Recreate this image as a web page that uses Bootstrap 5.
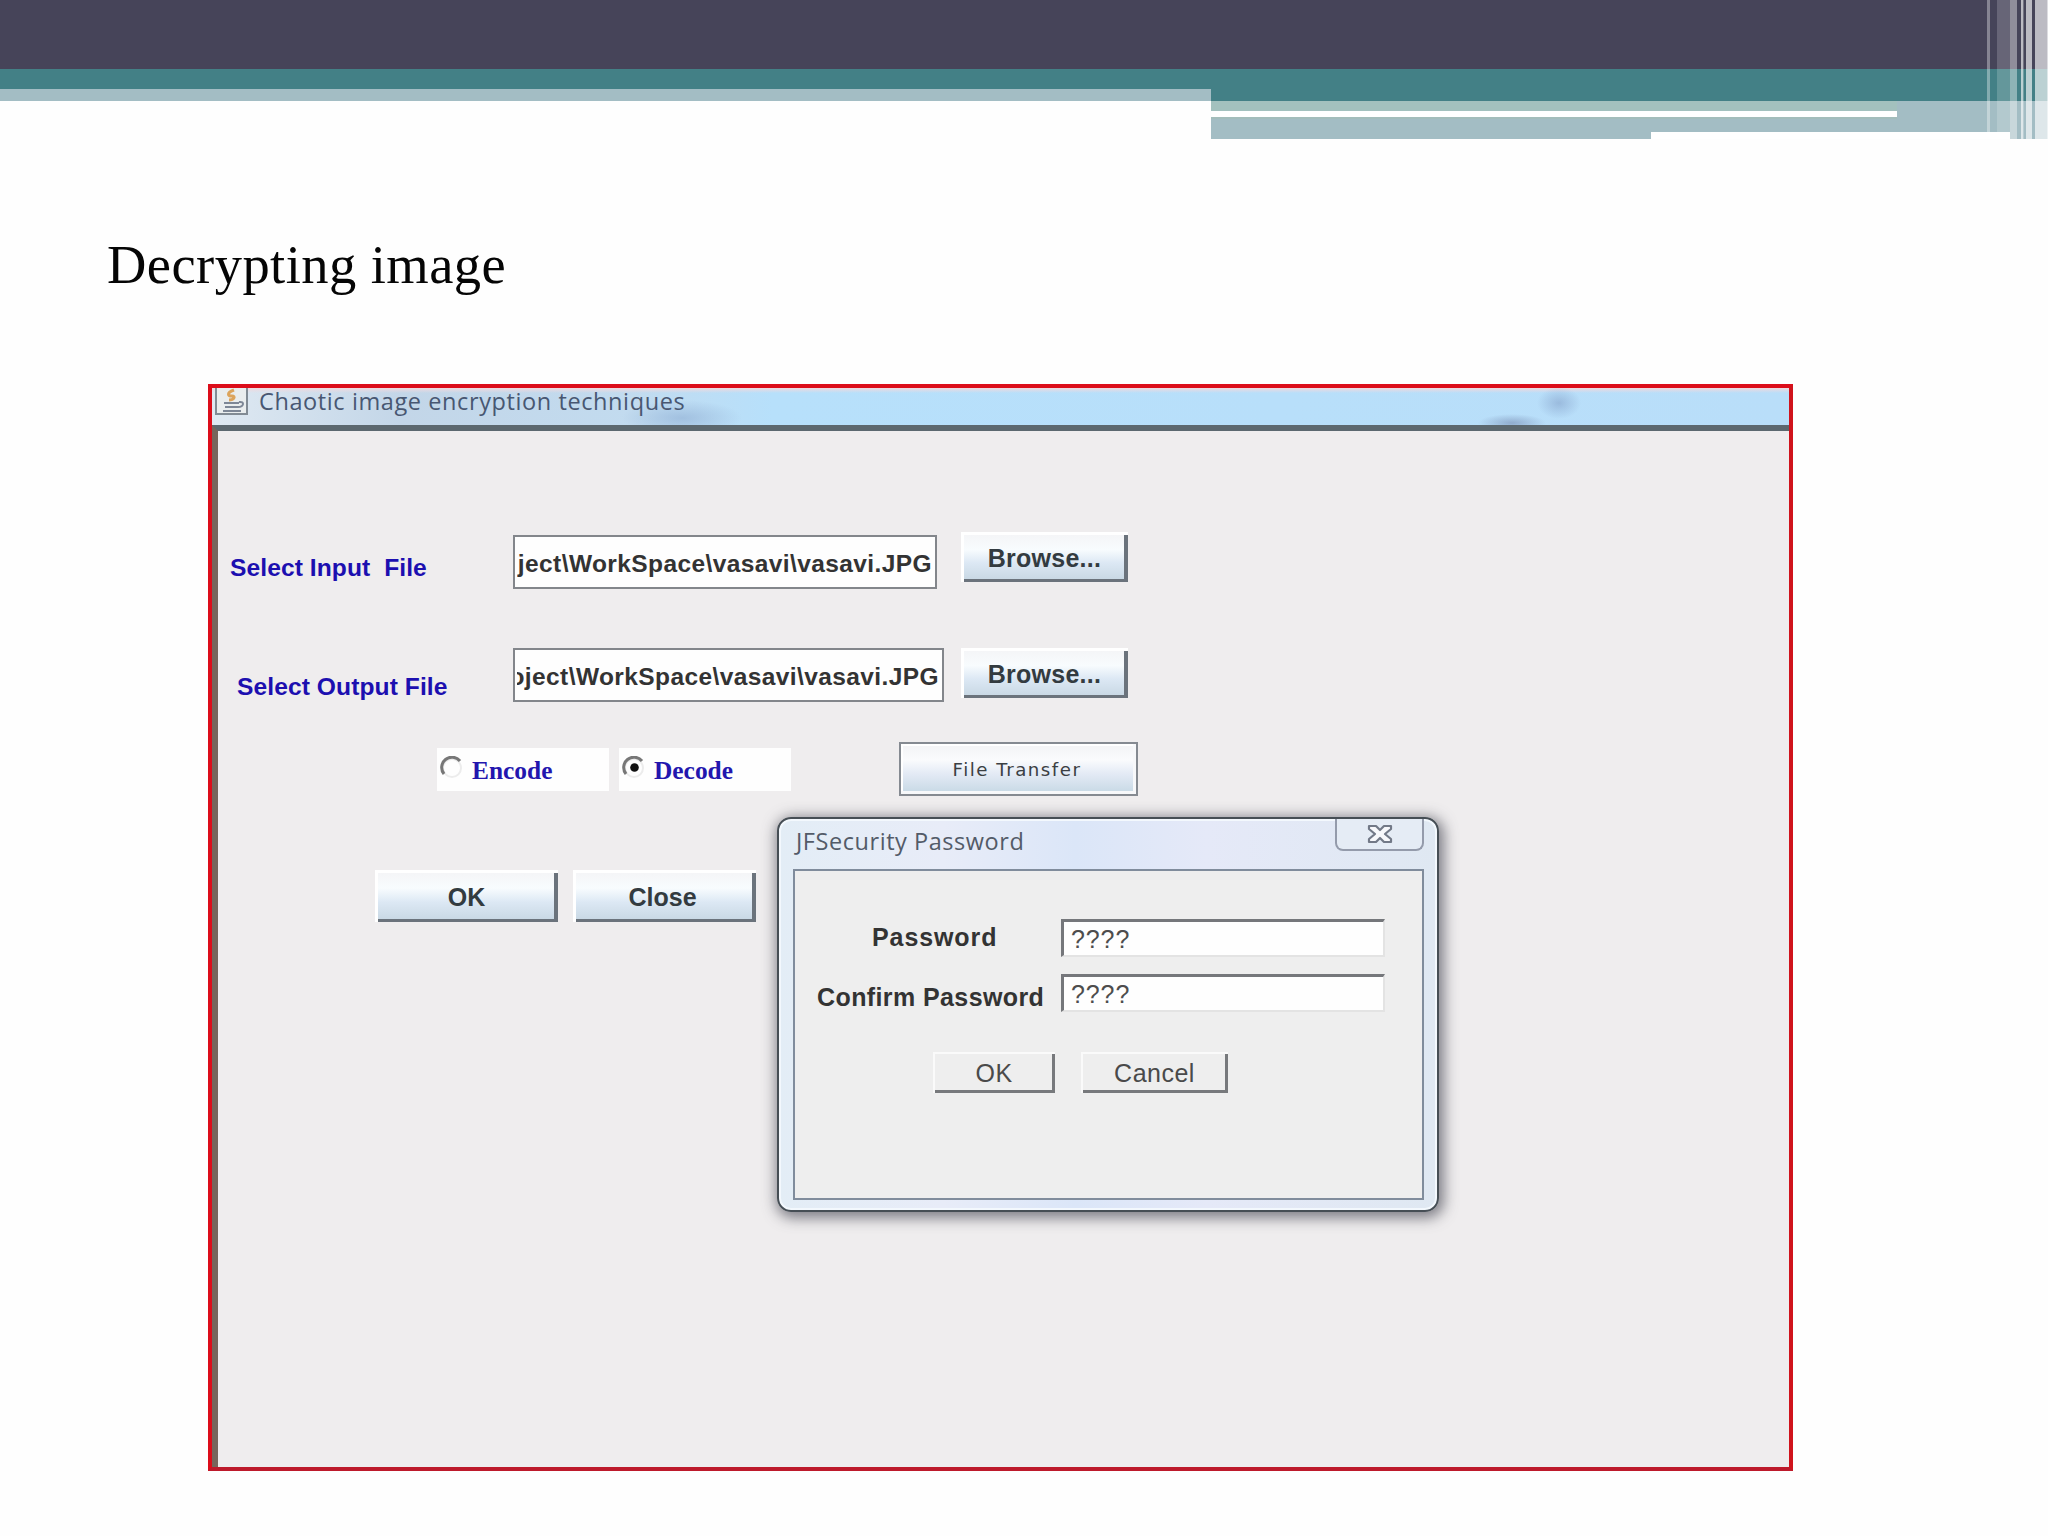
<!DOCTYPE html>
<html lang="en">
<head>
<meta charset="utf-8">
<meta name="viewport" content="width=device-width, initial-scale=1">
<title>Decrypting image</title>
<link href="https://cdn.jsdelivr.net/npm/bootstrap@5.3.0/dist/css/bootstrap.min.css" rel="stylesheet">
<style>
body{width:2048px;height:1536px;background:#fefefe;overflow:hidden;font-family:"Liberation Sans",Arial,sans-serif;line-height:1}
.deck-top{height:139px}
.deck-top svg{width:2048px;height:139px}
.deck-title{height:54px;font:400 54.5px/1 "Liberation Serif",serif;letter-spacing:.45px;color:#050505;margin:99px 0 0 107px}
.win{width:1585px;height:1087px;margin:92px 0 0 208px;border:4px solid #dc0d1a;border-bottom-color:#bd1a2b;border-right-color:#d0131c;background:#efedee}
.win-bar{height:37px;padding-left:3px;font:23.5px/1 "Open Sans","Noto Sans",sans-serif;color:#485772;
 background:radial-gradient(ellipse 22px 16px at 1347px 15px,#8ba9d0aa,transparent),radial-gradient(ellipse 34px 9px at 1300px 35px,#7d93b8aa,transparent),radial-gradient(ellipse 60px 18px at 470px 30px,#93b2d6aa,transparent),linear-gradient(#f0d9de 0,#d5e8f800 5px),linear-gradient(90deg,#dfe9f2 0,#c3d6e8 190px,#c2dbef 420px,#b7e0fb 560px,#b9def9)}
.win-bar .cap{padding-bottom:10px;margin-left:3px;letter-spacing:.6px;white-space:nowrap}
.java{width:33px;height:28px}
.win-body{height:1042px;border-top:6px solid #5c686f;border-left:6px solid #77655b}
.line1{margin-top:101px;height:56px}
.line2{margin-top:60px;height:53px}
.line3{margin-top:41px;height:54px}
.line4{margin-top:74px;height:52px}
.blue{color:#1c0fb0;font-weight:700;font-size:24.6px;letter-spacing:.08px;white-space:pre}
.lab1{width:283px;margin:24px 0 0 12px}
.lab2{width:276px;margin:27px 0 0 19px}
.path{height:54px;border:2px solid #83868b;background:#fefefe;padding:5px 3px 0 2px;font-weight:700;font-size:24.5px;letter-spacing:.4px;color:#333;white-space:nowrap}
.path .clip{min-width:0;overflow:hidden;height:30px}
.raised{font-weight:700;font-size:25px;color:#333b40;border:0;border-radius:0;background:linear-gradient(#f4f4f6,#f8fcfe 35%,#dce8f4 62%,#c6d6e2);box-shadow:inset 3px 3px #fff,inset -4px -3px #6b737c;padding:3px 0 0}
.browse{width:167px;height:50px;letter-spacing:.25px}
.wide{width:183px;height:52px}
.opt{width:172px;height:43px;background:#fefefe;padding-left:3px}
.opt span{font:700 25.4px/1 "Liberation Serif",serif;color:#2316ae;margin:3px 0 0 9px}
.opt svg{width:23px;height:23px;margin-top:-3px}
.transfer{width:239px;height:54px;border:2px solid #858a91;border-radius:0;background:linear-gradient(#f3f3f5,#fafbfd 32%,#e3eaf5 60%,#c5d8e4);box-shadow:inset -3px -3px #f7f8fa,inset 2px 2px #fff;font:18.2px/1 "DejaVu Sans",sans-serif;letter-spacing:1.5px;color:#3b3f43;padding:3px 3px 0 0}
.dlg{left:777px;top:817px;width:662px;height:395px;border:2px solid #464e55;border-radius:14px;background:linear-gradient(90deg,#e3edf6,#e8ecf8 25%,#dbe6f8 45%,#e5e9f8 65%,#dfe8f2);box-shadow:2px 3px 14px 3px #55555fbb,inset 0 0 0 2px #f3f8fd;padding:0 13px 10px 14px}
.dlg-bar{height:50px;font:23.5px/1 "Open Sans","Noto Sans",sans-serif;letter-spacing:.55px;color:#535b68}
.dlg-bar .cap{margin:11px 0 0 3px;white-space:nowrap}
.dlg-x{width:89px;height:32px;border:2px solid #949bab;border-top:0;border-radius:0 0 8px 8px;background:#e5ecf5}
.dlg-body{height:331px;border:2px solid #808c9c;background:#eeeeee;color:#333}
.pw1{margin-top:48px;height:38px}.pw2{margin-top:17px;height:38px}
.pw1 b{width:189px;margin:6px 0 0 77px;font-size:25px;letter-spacing:.9px}
.pw2 b{width:244px;margin:11px 0 0 22px;font-size:25px;letter-spacing:.4px;white-space:nowrap}
.sunk{width:324px;height:38px;background:#fefefe;border:3px solid #75777b;border-right:2px solid #e3e3e3;border-bottom:2px solid #e3e3e3;padding:5px 0 0 7px;font-size:25px;letter-spacing:.9px;color:#4d4d4d}
.acts{margin:40px 0 0 138px}
.flat{height:41px;border:0;border-radius:0;background:#eee;box-shadow:inset 2px 2px #fafafa,inset -3px -3px #77797c;font-size:25px;letter-spacing:.5px;color:#4a4a4a;padding:2px 0 0}
</style>
<script src="https://cdn.jsdelivr.net/npm/bootstrap@5.3.0/dist/js/bootstrap.bundle.min.js"></script>
</head>
<body class="d-flex flex-column position-relative">
<header class="deck-top">
<svg class="d-block" viewBox="0 0 2048 139" shape-rendering="crispEdges" aria-hidden="true">
<path fill="#464459" d="M0 0h2048v69H0z"/><path fill="#438086" d="M0 69h2048v32H0z"/>
<path fill="#a3bdc4" d="M0 89h1211v12H0zM1211 101h837v38h-837z"/>
<path fill="#a3c1be" d="M1211 101h686v10h-686z"/><path fill="#a3bdbb" d="M1211 117h686v2h-686z"/>
<path fill="#fff" d="M1211 111h686v6h-686z"/>
<g fill="#fff"><path opacity=".35" d="M1987 0h3v139h-3z"/><path opacity=".18" d="M1997 0h13v139h-13z"/><path opacity=".4" d="M2010 0h7v139h-7z"/><path opacity=".64" d="M2021 0h2v139h-2zM2026 0h6v139h-6zM2035 0h12v139h-12z"/><path opacity=".25" d="M2023 0h1v139h-1z"/><path opacity=".82" d="M2047 0h1v139h-1z"/></g>
<path fill="#fff" d="M1651 132h359v7h-359z"/>
</svg>
</header>
<h1 class="deck-title">Decrypting image</h1>
<main class="win">
<div class="win-bar d-flex align-items-center">
<svg class="java me-2 align-self-start" viewBox="0 0 33 28" fill="none" aria-hidden="true"><path d="M1 0v26h31V0" fill="#e9edee" stroke="#818b94" stroke-width="2"/><path d="M19 2c-8 3-6 6-2 6s2 4-3 4" stroke="#dca45b" stroke-width="3"/><path d="M9 15h15M10 19h13M8 23h18M24 14c6-1 5 5-1 5" stroke="#7d8796" stroke-width="2"/></svg>
<span class="cap">Chaotic image encryption techniques</span>
</div>
<div class="win-body">
<div class="line1 d-flex align-items-start">
<label class="blue lab1">Select Input  File</label>
<div class="path d-flex align-items-center" style="width:424px;margin-top:3px"><div class="clip d-flex align-items-center justify-content-end flex-fill"><span>ject\WorkSpace\vasavi\vasavi.JPG</span></div></div>
<button class="btn raised browse ms-4">Browse...</button>
</div>
<div class="line2 d-flex align-items-start">
<label class="blue lab2">Select Output File</label>
<div class="path d-flex align-items-center" style="width:431px"><div class="clip d-flex align-items-center justify-content-end flex-fill"><span>oject\WorkSpace\vasavi\vasavi.JPG</span></div></div>
<button class="btn raised browse" style="margin-left:17px">Browse...</button>
</div>
<div class="line3 d-flex align-items-center">
<div class="opt d-flex align-items-center" style="margin-left:219px"><svg viewBox="0 0 23 23" fill="none"><circle cx="12" cy="12" r="9" stroke="#ececec" stroke-width="2"/><path d="M4 18A10 10 0 0 1 20 5" stroke="#777" stroke-width="3"/></svg><span>Encode</span></div>
<div class="opt d-flex align-items-center" style="margin-left:10px"><svg viewBox="0 0 23 23" fill="none"><circle cx="12" cy="12" r="9" stroke="#ececec" stroke-width="2"/><path d="M4 18A10 10 0 0 1 20 5" stroke="#777" stroke-width="3"/><circle cx="12.5" cy="11.5" r="4.3" fill="#111"/></svg><span>Decode</span></div>
<button class="btn transfer" style="margin-left:108px">File Transfer</button>
</div>
<div class="line4 d-flex">
<button class="btn raised wide" style="margin-left:157px">OK</button>
<button class="btn raised wide pe-1" style="margin-left:15px">Close</button>
</div>
</div>
</main>
<section class="dlg position-absolute" role="dialog">
<div class="dlg-bar d-flex justify-content-between align-items-start">
<span class="cap">JFSecurity Password</span>
<div class="dlg-x d-flex justify-content-center"><svg width="28" height="22" viewBox="0 0 28 22" class="mt-1" aria-label="Close"><path d="M3 3h7l4 4 4-4h7v3l-6 5 6 5v3h-7l-4-4-4 4H3v-3l6-5-6-5z" fill="#f7f8fb" stroke="#727987" stroke-width="2.200" stroke-linejoin="round"/></svg></div>
</div>
<div class="dlg-body">
<div class="pw1 d-flex align-items-start"><b>Password</b><div class="sunk">????</div></div>
<div class="pw2 d-flex align-items-start"><b>Confirm Password</b><div class="sunk">????</div></div>
<div class="acts d-flex"><button class="btn flat" style="width:122px">OK</button><button class="btn flat" style="width:147px;margin-left:26px">Cancel</button></div>
</div>
</section>
</body>
</html>
